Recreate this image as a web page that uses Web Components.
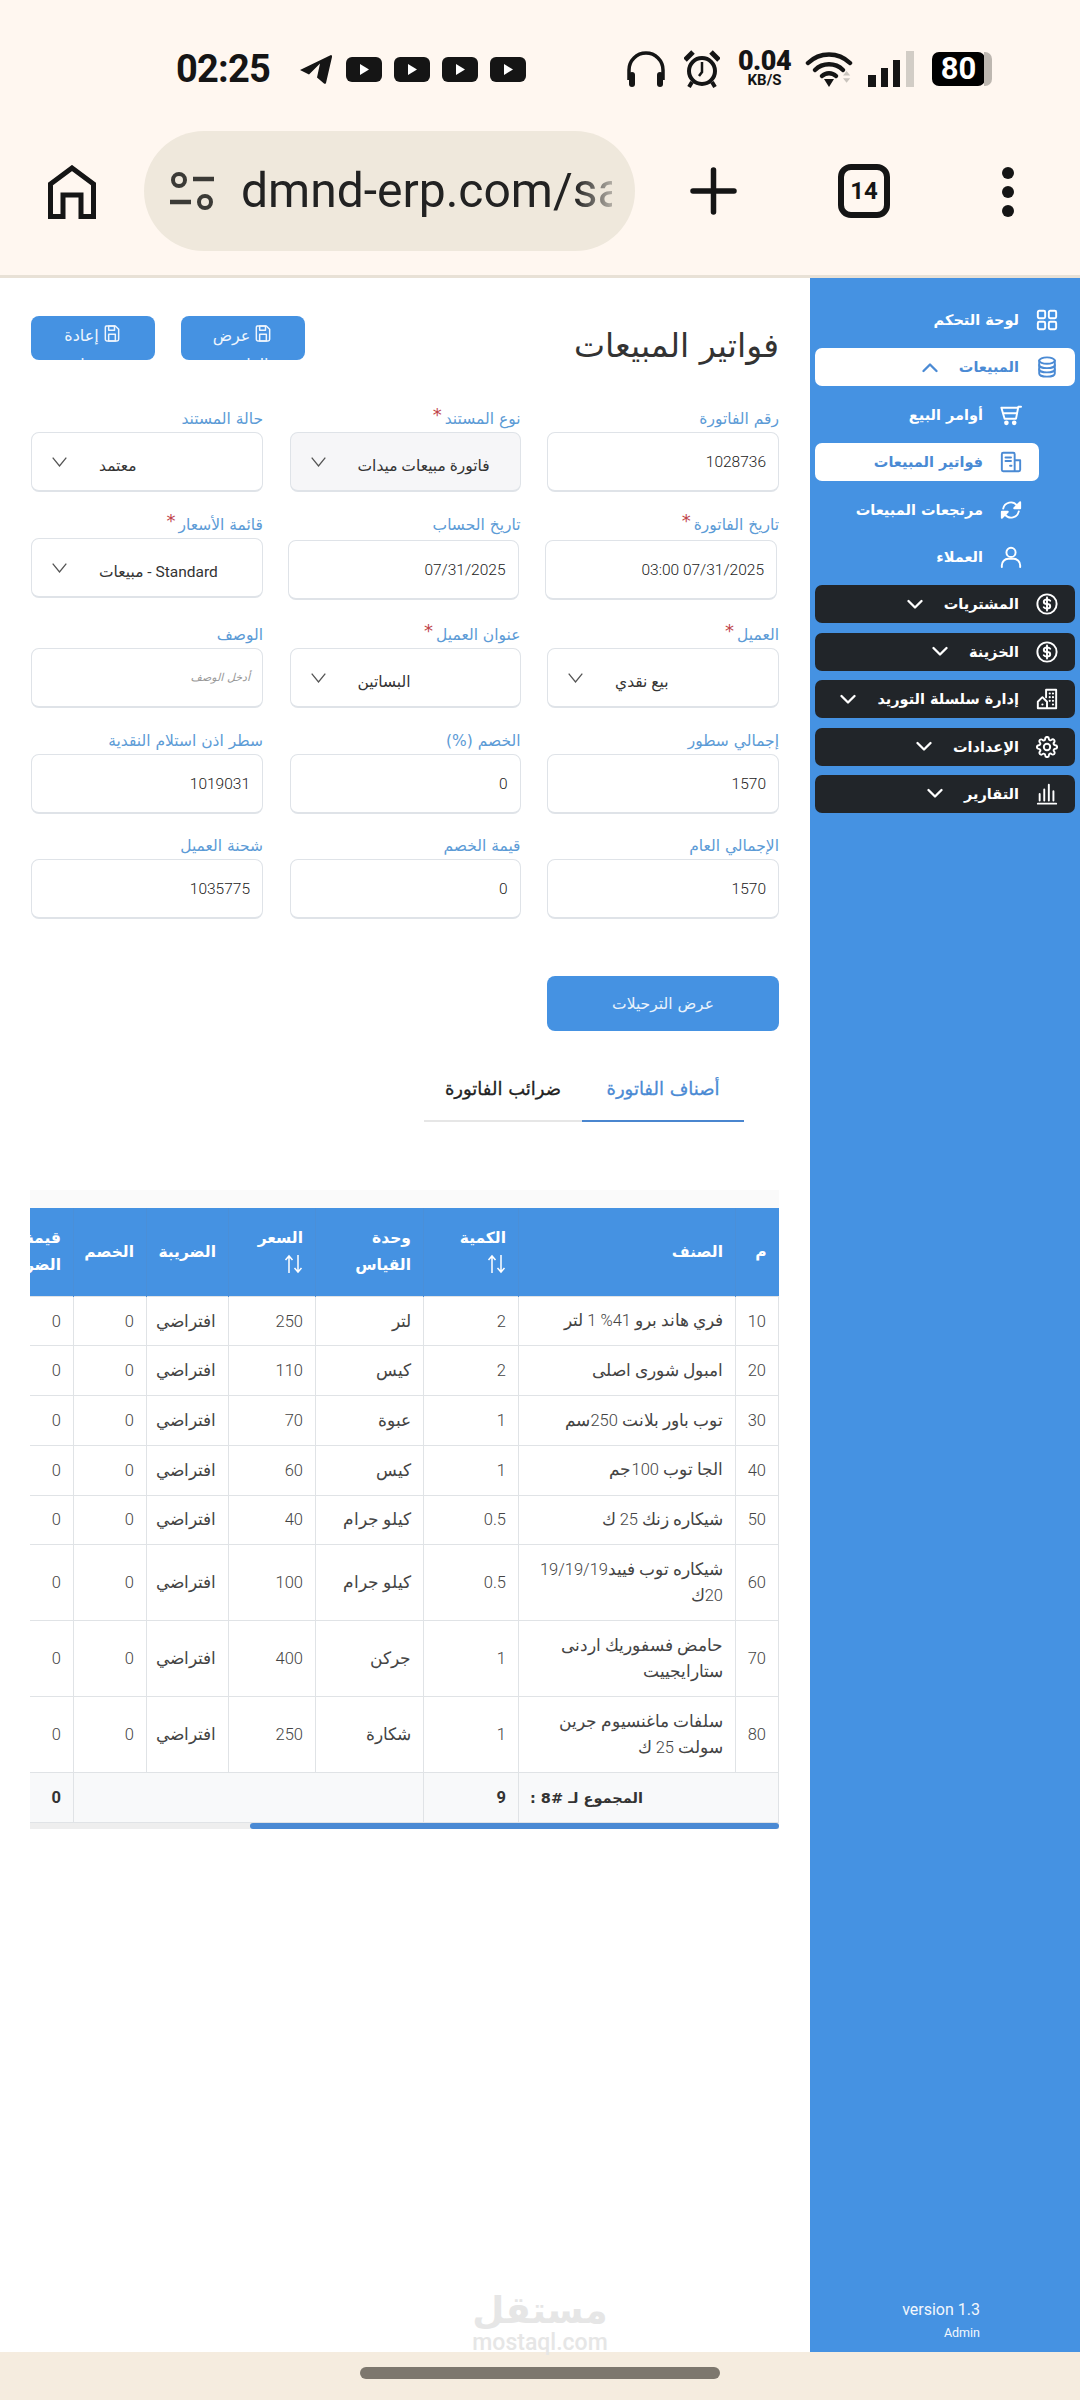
<!DOCTYPE html>
<html lang="ar">
<head>
<meta charset="utf-8">
<title>فواتير المبيعات</title>
<style>
	html, body { margin: 0; padding: 0; }
	body {
		width: 1080px;
		height: 2400px;
		overflow: hidden;
		display: flex;
		flex-direction: column;
		background: #fff;
		font-family: Roboto, "DejaVu Sans", sans-serif;
	}
</style>
</head>
<body>
	<phone-status></phone-status>
	<browser-bar></browser-bar>
	<app-shell>
		<page-head slot="main" title="فواتير المبيعات"></page-head>
		<invoice-form slot="main"></invoice-form>
		<wide-button slot="main">عرض الترحيلات</wide-button>
		<invoice-tabs slot="main"></invoice-tabs>
		<items-table slot="main"></items-table>
		<water-mark slot="main"></water-mark>
		<side-menu slot="side"></side-menu>
	</app-shell>
	<home-bar></home-bar>

<script>
const ICONS = {
	grid: '<rect x="2" y="2" width="8" height="8" rx="1.5"/><rect x="14" y="2" width="8" height="8" rx="1.5"/><rect x="2" y="14" width="8" height="8" rx="1.5"/><rect x="14" y="14" width="8" height="8" rx="1.5"/>',
	db: '<ellipse cx="12" cy="5" rx="8.5" ry="3.5"/><path d="M3.5 5v14c0 2 3.8 3.5 8.5 3.5s8.5-1.500 8.500-3.500V5"/><path d="M3.500 9.700c0 2 3.800 3.500 8.500 3.500s8.500-1.500 8.500-3.500"/><path d="M3.500 14.400c0 2 3.800 3.500 8.500 3.500s8.500-1.500 8.500-3.500"/>',
	cart: '<path d="M23 3h-3L17.500 16H5L1.500 4H20"/><path d="M4 10h14.500"/><circle cx="7" cy="20.500" r="1.500" fill="currentColor"/><circle cx="15.500" cy="20.500" r="1.500" fill="currentColor"/>',
	invoice: '<path d="M16 22H3.500A1.500 1.500 0 0 1 2 20.500V3.500A1.500 1.500 0 0 1 3.500 2h11A1.500 1.500 0 0 1 16 3.500V22h4.500a1.500 1.500 0 0 0 1.500-1.500V10h-6"/><path d="M6 7h6M6 11h6"/><path d="M11 16h1.500"/>',
	refresh: '<path d="M3.500 10.500A8.500 8.500 0 0 1 18.500 7"/><path d="M20.500 13.500A8.500 8.500 0 0 1 5.500 17"/><path d="M22 3.500v6.500h-6.500z" fill="currentColor"/><path d="M2 20.500V14h6.500z" fill="currentColor"/>',
	user: '<circle cx="12" cy="7" r="5"/><path d="M2 23v-2a7 7 0 0 1 7-7h6a7 7 0 0 1 7 7v2"/>',
	dollar: '<circle cx="12" cy="12" r="10.500"/><path d="M15.500 8.500C14.800 7.500 13.500 7 12 7c-2 0-3.500 1-3.500 2.500S10 12 12 12s3.500 1 3.500 2.500S14 17 12 17c-1.500 0-2.800-.5-3.500-1.500"/><path d="M12 5v14"/>',
	building: '<path d="M11 10V2h11v20H2v-7l5-5 5 5v7"/><path d="M15 6h.01M18.500 6h.01M15 10h.01M18.500 10h.01M15 14h.01M18.500 14h.01M18.500 18h.01M7 18h.01" stroke-width="2.400"/>',
	gear: '<circle cx="12" cy="12" r="3.500"/><path d="M19.400 15a1.650 1.650 0 0 0 .33 1.820l.06.06a2 2 0 0 1 0 2.830 2 2 0 0 1-2.830 0l-.06-.06a1.650 1.650 0 0 0-1.820-.33 1.650 1.650 0 0 0-1 1.510V21a2 2 0 0 1-2 2 2 2 0 0 1-2-2v-.09A1.650 1.650 0 0 0 9 19.400a1.650 1.650 0 0 0-1.820.33l-.06.06a2 2 0 0 1-2.830 0 2 2 0 0 1 0-2.830l.06-.06a1.650 1.650 0 0 0 .33-1.820 1.650 1.650 0 0 0-1.510-1H3a2 2 0 0 1-2-2 2 2 0 0 1 2-2h.09A1.650 1.650 0 0 0 4.600 9a1.650 1.650 0 0 0-.33-1.820l-.06-.06a2 2 0 0 1 0-2.830 2 2 0 0 1 2.830 0l.06.06a1.650 1.650 0 0 0 1.820.33H9a1.650 1.650 0 0 0 1-1.510V3a2 2 0 0 1 2-2 2 2 0 0 1 2 2v.09a1.650 1.650 0 0 0 1 1.510 1.650 1.650 0 0 0 1.820-.33l.06-.06a2 2 0 0 1 2.830 0 2 2 0 0 1 0 2.830l-.06.06a1.650 1.650 0 0 0-.33 1.820V9a1.650 1.650 0 0 0 1.510 1H21a2 2 0 0 1 2 2 2 2 0 0 1-2 2h-.09a1.650 1.650 0 0 0-1.510 1z"/>',
	chart: '<path d="M2 22.500h20"/><path d="M4 19v-7M9 19V7M14 19V2M19 19V9"/>',
	save: '<path d="M5 3h11l4 4v12a2 2 0 0 1-2 2H6a2 2 0 0 1-2-2V5a2 2 0 0 1 1-2z"/><rect x="8" y="3" width="7" height="5"/><rect x="8" y="13" width="8" height="8"/>'
};

function icon(name, w, h, sw) {
	return `<svg viewBox="0 0 24 24" width="${w}" height="${h}" fill="none" stroke="currentColor" stroke-width="${sw || 2}" stroke-linecap="round" stroke-linejoin="round">${ICONS[name]}</svg>`;
}

// base class, keeps the boilerplate out of each element
class Part extends HTMLElement {
	constructor() {
		super();
		this.attachShadow({ mode: 'open' });
	}
	connectedCallback() {
		this.shadowRoot.innerHTML = this.markup();
	}
}

class PhoneStatus extends Part {
	markup() {
		const yt = `<svg width="36" height="25" viewBox="0 0 36 25"><rect width="36" height="25" rx="6" fill="#151515"/><path d="M14 7l9 5.500-9 5.500z" fill="#fff"/></svg>`;
		return `
			<style>
				:host { display: flex; align-items: center; height: 118px; box-sizing: border-box; padding: 50px 88px 30px 176px; background: #fff7f0; color: #151515; flex: none; }
				.time { font: 700 38px/38px Roboto, sans-serif; width: 96px; margin-right: 28px; white-space: nowrap; letter-spacing: -.8px; }
				.left { display: flex; align-items: center; }
				.right { display: flex; align-items: center; margin-left: auto; }
				.yts { display: flex; gap: 12px; margin-left: 14px; }
				.speed { display: flex; flex-direction: column; align-items: center; width: 59px; margin: 0 11px 0 15px; font-family: Roboto, sans-serif; font-weight: 700; }
				.speed b { font-size: 27px; line-height: 23px; letter-spacing: -.5px; }
				.speed i { font-style: normal; font-size: 15px; line-height: 15px; }
				.batt { position: relative; display: flex; margin-left: 18px; }
				.batt span { display: block; width: 53px; height: 34px; background: #000; border-radius: 7px; color: #fff; font: 700 31px/34px Roboto, sans-serif; text-align: center; }
				.batt u { display: block; width: 8px; height: 34px; background: #bdb7b0; border-radius: 0 7px 7px 0; margin-left: -1px; }
			</style>
			<div class="left">
				<span class="time">02:25</span>
				<svg width="32" height="29" viewBox="0 0 32 29"><path d="M0 15L31 0c1 0 1 1 1 2l-6 26c-.3 1-1.500 1-2 .5l-7-6 3-14-11 11z" fill="#151515"/></svg>
				<div class="yts">${yt}${yt}${yt}${yt}</div>
			</div>
			<div class="right">
				<svg width="40" height="38" viewBox="0 0 40 38" fill="none" stroke="#151515" stroke-width="3.500"><path d="M3 30V20a17 17 0 0 1 34 0v10"/><rect x="3" y="22" width="6" height="15" rx="3" fill="#151515" stroke="none"/><rect x="31" y="22" width="6" height="15" rx="3" fill="#151515" stroke="none"/></svg>
				<svg width="36" height="38" viewBox="0 0 36 38" style="margin-left:18px" fill="none" stroke="#151515" stroke-width="4"><circle cx="18" cy="21" r="13"/><path d="M18 12v10l-3 4" stroke-width="2.500"/><path d="M1 10l8-8M35 10l-8-8" stroke-width="5"/><path d="M8 32l-3 5M28 32l3 5"/></svg>
				<div class="speed"><b>0.04</b><i>KB/S</i></div>
				<svg width="50" height="36" viewBox="0 0 50 36" fill="none" stroke="#151515" stroke-width="4.500" stroke-linecap="round"><path d="M3 12a30 30 0 0 1 42 0"/><path d="M10 19a20 20 0 0 1 28 0"/><path d="M17 25a10 10 0 0 1 14 0"/><path d="M19 28h10l-5 8z" fill="#151515" stroke="none"/><path d="M40 25l4-5 4 5zM40 28l4 5 4-5z" fill="#c9c4bd" stroke="none" transform="translate(2 2) scale(.9)"/></svg>
				<svg width="46" height="36" viewBox="0 0 46 36" style="margin-left:13px"><rect x="0" y="24" width="8" height="12" fill="#151515"/><rect x="13" y="17" width="7" height="19" fill="#151515"/><rect x="25" y="9" width="7" height="27" fill="#151515"/><rect x="38" y="0" width="8" height="36" fill="#d2cdc6"/></svg>
				<div class="batt"><span>80</span><u></u></div>
			</div>
		`;
	}
}

class BrowserBar extends Part {
	markup() {
		return `
			<style>
				:host { display: flex; align-items: flex-start; height: 160px; box-sizing: border-box; padding: 13px 0 0 48px; background: #fff7f0; border-bottom: 3px solid #e8e1d6; color: #151515; flex: none; }
				.home { margin-top: 34px; }
				.pill { display: flex; align-items: center; width: 491px; height: 120px; margin-left: 48px; box-sizing: border-box; padding: 0 23px 0 26px; border-radius: 60px; background: #efe8dc; flex: none; }
				.url { margin-left: 27px; font: 400 48px/60px Roboto, sans-serif; color: #222; white-space: nowrap; overflow: hidden; width: 371px;
					-webkit-mask-image: linear-gradient(to right, #000 90%, rgba(0,0,0,.3) 100%); mask-image: linear-gradient(to right, #000 90%, rgba(0,0,0,.3) 100%); }
				.plus { margin: 36px 0 0 55px; }
				.tab { margin: 33px 0 0 101px; width: 52px; height: 54px; box-sizing: border-box; border: 6px solid #151515; border-radius: 13px; display: flex; align-items: center; justify-content: center; font: 700 24px/1 Roboto, sans-serif; }
				.dots { margin: 36px 0 0 112px; display: flex; flex-direction: column; gap: 7px; }
				.dots span { display: block; width: 12px; height: 12px; border-radius: 50%; background: #151515; }
			</style>
			<svg class="home" width="48" height="54" viewBox="0 0 48 54" fill="none" stroke="#151515" stroke-width="5"><path d="M2.500 51.500V19L24 3l21.500 16v32.500H33V30H15v21.500z"/></svg>
			<div class="pill">
				<svg width="44" height="38" viewBox="0 0 44 38" fill="none" stroke="#3b3a36" stroke-width="4" style="flex:none"><circle cx="9" cy="8" r="6"/><path d="M23 7h21" stroke-width="4.500"/><path d="M0 30h21" stroke-width="4.500"/><circle cx="35" cy="30" r="6"/></svg>
				<div class="url">dmnd-erp.com/sales</div>
			</div>
			<svg class="plus" width="47" height="48" viewBox="0 0 47 48" stroke="#151515" stroke-width="5.500" stroke-linecap="round"><path d="M23.500 3v42M3 24h41"/></svg>
			<div class="tab">14</div>
			<div class="dots"><span></span><span></span><span></span></div>
		`;
	}
}

class AppShell extends Part {
	markup() {
		return `
			<style>
				:host { display: flex; flex: 1; min-height: 0; }
				.main { position: relative; width: 810px; flex: none; box-sizing: border-box; padding: 38px 31px 0 30px; display: flex; flex-direction: column; }
				.side { width: 270px; flex: none; display: flex; }
			</style>
			<div class="main"><slot name="main"></slot></div>
			<div class="side"><slot name="side"></slot></div>
		`;
	}
}

class PageHead extends Part {
	markup() {
		return `
			<style>
				:host { display: flex; direction: rtl; justify-content: space-between; align-items: flex-start; height: 91px; color: #333; }
				h1 { margin: 8px 0 0; font: 400 33px/44px "DejaVu Sans", sans-serif; color: #333; }
				.btns { display: flex; gap: 26px; padding-left: 1px; }
				.btn { width: 124px; height: 44px; overflow: hidden; box-sizing: border-box; padding: 5px 8px 0; border-radius: 8px; background: #4592e2; color: #eef5fd; text-align: center; font: 400 16px/29px "DejaVu Sans", sans-serif; white-space: nowrap; }
				.btn svg { vertical-align: -5px; margin-left: 3px; }
			</style>
			<h1>${this.getAttribute('title')}</h1>
			<div class="btns">
				<div class="btn">${icon('save', 20, 25, 1.8)}عرض<br>الفاتورة</div>
				<div class="btn">${icon('save', 20, 25, 1.8)}إعادة<br>ترحيل</div>
			</div>
		`;
	}
}

class ErpField extends Part {
	markup() {
		const a = (n) => this.getAttribute(n) || '';
		const isSelect = a('kind') === 'select';
		const star = this.hasAttribute('required') ? '<em>*</em>' : '';
		let inner;
		if (isSelect) {
			inner = `<svg width="15" height="10" viewBox="0 0 15 10" fill="none" stroke="#555" stroke-width="1.300"><path d="M.7.700l6.800 8.300L14.300.700"/></svg><span class="sel" dir="rtl">${a('value')}</span>`;
		} else if (a('placeholder')) {
			inner = `<i>${a('placeholder')}</i>`;
		} else {
			inner = `<span dir="ltr">${a('value')}</span>`;
		}
		return `
			<style>
				:host { display: block; direction: rtl; ${a('shift') ? 'transform: translate(-2px, 2px);' : ''} }
				.lab { height: 25px; font: 400 15.500px/24px "DejaVu Sans", sans-serif; color: #5c9bd6; white-space: nowrap; }
				${a('shift') ? '.lab { transform: translate(2px, -2px); }' : ''}
				em { font-style: normal; color: #c0444a; font-size: 18px; line-height: 14px; vertical-align: 3px; margin-right: 3px; }
				.box { height: 60px; box-sizing: border-box; border: 1px solid #dfe3e8; border-bottom-width: 2px; border-radius: 8px; background: ${this.hasAttribute('muted') ? '#f6f6f8' : '#fff'}; display: flex; align-items: center; padding: 0 12px; font: 300 15.500px/20px Roboto, "DejaVu Sans", sans-serif; color: #222; }
				.box.select { direction: ltr; padding: 0 0 0 20px; }
				.sel { margin-left: 32px; padding-top: 8px; font-size: 15.500px; font-weight: 400; color: #333; white-space: nowrap; }
				i { font: italic 400 11px/20px "DejaVu Sans", sans-serif; color: #999; }
			</style>
			<div class="lab">${a('label')}${star}</div>
			<div class="box ${isSelect ? 'select' : ''}">${inner}</div>
		`;
	}
}

class InvoiceForm extends Part {
	markup() {
		return `
			<style>
				:host { display: grid; direction: rtl; grid-template-columns: 232px 231px 232px; column-gap: 26.500px; justify-content: start; grid-template-rows: 106px 110px 106px 105px 85px; }
			</style>
			<erp-field label="رقم الفاتورة" value="1028736"></erp-field>
			<erp-field label="نوع المستند" required kind="select" muted value="فاتورة مبيعات ميدات"></erp-field>
			<erp-field label="حالة المستند" kind="select" value="معتمد"></erp-field>
			<erp-field label="تاريخ الفاتورة" required shift="1" value="03:00 07/31/2025"></erp-field>
			<erp-field label="تاريخ الحساب" shift="1" value="07/31/2025"></erp-field>
			<erp-field label="قائمة الأسعار" required kind="select" value="Standard - مبيعات"></erp-field>
			<erp-field label="العميل" required kind="select" value="بيع نقدي"></erp-field>
			<erp-field label="عنوان العميل" required kind="select" value="البساتين"></erp-field>
			<erp-field label="الوصف" placeholder="أدخل الوصف"></erp-field>
			<erp-field label="إجمالي سطور" value="1570"></erp-field>
			<erp-field label="الخصم (%)" value="0"></erp-field>
			<erp-field label="سطر اذن استلام النقدية" value="1019031"></erp-field>
			<erp-field label="الإجمالي العام" value="1570"></erp-field>
			<erp-field label="قيمة الخصم" value="0"></erp-field>
			<erp-field label="شحنة العميل" value="1035775"></erp-field>
		`;
	}
}

class WideButton extends Part {
	markup() {
		return `
			<style>
				:host { display: flex; align-self: flex-end; align-items: center; justify-content: center; width: 232px; height: 55px; margin-top: 57px; border-radius: 8px; background: #4592e2; color: #eaf3fc; font: 400 15.500px/20px "DejaVu Sans", sans-serif; direction: rtl; }
			</style>
			<slot></slot>
		`;
	}
}

class InvoiceTabs extends Part {
	markup() {
		return `
			<style>
				:host { display: flex; direction: rtl; height: 90px; padding-right: 35px; flex: none; font: 400 18px/20px "DejaVu Sans", sans-serif; -webkit-text-stroke: .3px currentColor; }
				.tab { display: flex; align-items: center; justify-content: center; box-sizing: border-box; height: 91px; padding-top: 27px; border-bottom: 2px solid #e6e6e6; color: #222; white-space: nowrap; }
				.on { width: 162px; color: #4a8ad4; border-bottom-color: #4a86cf; }
				.off { width: 158px; }
			</style>
			<div class="tab on">أصناف الفاتورة</div>
			<div class="tab off">ضرائب الفاتورة</div>
		`;
	}
}

class ItemsTable extends Part {
	markup() {
		const rows = [
			['10', 'فري هاند برو 41% 1 لتر', '2', 'لتر', '250', 49],
			['20', 'امبول شورى اصلى', '2', 'كيس', '110', 50],
			['30', 'توب باور بلانت 250سم', '1', 'عبوة', '70', 50],
			['40', 'الجا توب 100جم', '1', 'كيس', '60', 49.500],
			['50', 'شيكاره زنك 25 ك', '0.5', 'كيلو جرام', '40', 49.500],
			['60', 'شيكاره توب فييد19/19/19<br>20ك', '0.5', 'كيلو جرام', '100', 76],
			['70', 'حامض فسفوريك اردنى<br>ستارايجييت', '1', 'جركن', '400', 76],
			['80', 'سلفات ماغنسيوم جرين<br>سولت 25 ك', '1', 'شكارة', '250', 76]
		];
		const body = rows.map((r) => `<tr style="height:${r[5]}px">
			<td>${r[0]}</td><td class="item">${r[1]}</td><td>${r[2]}</td><td>${r[3]}</td><td>${r[4]}</td><td>افتراضي</td><td>0</td><td>0</td>
		</tr>`).join('');
		const sort = '<svg width="19" height="20" viewBox="0 0 19 20" fill="none" stroke="#fff" stroke-width="1.500"><path d="M5 19V2M1.500 6L5 2l3.500 4M14 1v17M10.500 14l3.500 4 3.500-4"/></svg>';
		return `
			<style>
				:host { display: block; direction: rtl; width: 749px; margin-top: 69px; overflow: hidden; flex: none; border-top: 18px solid #fafafa; padding-bottom: 6px; position: relative; }
				table { border-collapse: collapse; table-layout: fixed; width: 796px; font: 300 16.500px/19px Roboto, "DejaVu Sans", sans-serif; color: #444; }
				th { height: 88px; padding: 0 12px; background: #4592e2; color: #fff; font: 700 15.500px/27px "DejaVu Sans", sans-serif; text-align: right; border-left: 1px solid #4a8fd8; white-space: nowrap; overflow: hidden; }
				td { padding: 0 12px; border: 1px solid #e0e3e6; text-align: right; white-space: nowrap; }
				td.item { line-height: 26px; font-size: 16.500px; overflow: hidden; }
				tfoot td { height: 49px; background: #f8f9fa; font-weight: 700; color: #333; }
				tfoot .lbl { text-align: left; padding-left: 11px; font: 700 14.500px/20px "DejaVu Sans", sans-serif; }
				svg { display: inline-block; vertical-align: -4px; }
				.bar { position: absolute; left: 0; right: 0; bottom: 0; height: 6px; background: #eee; }
				.bar span { position: absolute; right: 0; width: 529px; height: 6px; border-radius: 3px; background: #4a8ad4; }
			</style>
			<table>
				<colgroup><col style="width:43px"><col style="width:217px"><col style="width:95px"><col style="width:108px"><col style="width:87px"><col style="width:82px"><col style="width:73px"><col style="width:91px"></colgroup>
				<thead><tr>
					<th>م</th><th>الصنف</th><th>الكمية<br>${sort}</th><th>وحدة<br>القياس</th><th>السعر<br>${sort}</th><th>الضريبة</th><th>الخصم</th><th>قيمة<br>الضريبة</th>
				</tr></thead>
				<tbody>${body}</tbody>
				<tfoot><tr>
					<td colspan="2" class="lbl">المجموع لـ #8 :</td><td>9</td><td colspan="4"></td><td>0</td>
				</tr></tfoot>
			</table>
			<div class="bar"><span></span></div>
		`;
	}
}

class WaterMark extends Part {
	markup() {
		return `
			<style>
				:host { position: absolute; left: 470px; top: 2010px; width: 140px; text-align: center; color: #e6e6e6; }
				b { display: block; font: 700 37px/46px "DejaVu Sans", sans-serif; white-space: nowrap; }
				span { display: block; font: 500 23px/18px Roboto, sans-serif; }
			</style>
			<b>مستقل</b>
			<span>mostaql.com</span>
		`;
	}
}

class SideItem extends Part {
	markup() {
		const a = (n) => this.getAttribute(n) || '';
		const tone = a('tone');
		const chev = a('chev');
		const chevPath = chev === 'up' ? 'M1.500 9L8 2.500 14.500 9' : 'M1.500 2L8 8.500 14.500 2';
		const chevSvg = chev ? `<svg class="ch" width="16" height="11" viewBox="0 0 16 11" fill="none" stroke="currentColor" stroke-width="2.300" stroke-linecap="round" stroke-linejoin="round"><path d="${chevPath}"/></svg>` : '';
		const bg = tone === 'dark' ? '#212529' : tone === 'on' ? '#fff' : 'transparent';
		const col = tone === 'on' ? '#4a8ad4' : '#fff';
		return `
			<style>
				:host { display: flex; direction: rtl; align-items: center; height: 38px; box-sizing: border-box; padding-right: 17px; border-radius: 7px; background: ${bg}; color: ${col}; font: 700 14.500px/20px "DejaVu Sans", sans-serif; white-space: nowrap; }
				.ch { margin-right: 21px; }
			</style>
			<span style="display:flex">${icon(a('icon'), 22, 22, 2.100)}</span>
			<span style="margin-right:17px">${a('text')}</span>
			${chevSvg}
		`;
	}
}

class SideMenu extends Part {
	markup() {
		return `
			<style>
				:host { display: flex; flex-direction: column; flex: 1; box-sizing: border-box; padding: 23px 5px 11px; gap: 9.400px; background: #4592e2; }
				.sub { display: flex; flex-direction: column; gap: 9.400px; padding-right: 36px; }
				.foot { margin-top: auto; direction: ltr; text-align: right; padding-right: 95px; color: #f2f7fd; font-family: Roboto, sans-serif; }
				.foot div { font-size: 16px; line-height: 20px; }
				.foot small { display: block; margin-top: 5px; font-size: 12.500px; line-height: 16px; }
			</style>
			<side-item icon="grid" text="لوحة التحكم"></side-item>
			<side-item icon="db" text="المبيعات" tone="on" chev="up"></side-item>
			<div class="sub">
				<side-item icon="cart" text="أوامر البيع"></side-item>
				<side-item icon="invoice" text="فواتير المبيعات" tone="on"></side-item>
				<side-item icon="refresh" text="مرتجعات المبيعات"></side-item>
				<side-item icon="user" text="العملاء"></side-item>
			</div>
			<side-item icon="dollar" text="المشتريات" tone="dark" chev="down"></side-item>
			<side-item icon="dollar" text="الخزينة" tone="dark" chev="down"></side-item>
			<side-item icon="building" text="إدارة سلسلة التوريد" tone="dark" chev="down"></side-item>
			<side-item icon="gear" text="الإعدادات" tone="dark" chev="down"></side-item>
			<side-item icon="chart" text="التقارير" tone="dark" chev="down"></side-item>
			<div class="foot"><div>version 1.3</div><small>Admin</small></div>
		`;
	}
}

class HomeBar extends Part {
	markup() {
		return `
			<style>
				:host { display: flex; height: 48px; flex: none; padding: 15px 0 0 360px; box-sizing: border-box; background: #f5ecdf; }
				span { display: block; width: 360px; height: 12px; border-radius: 6px; background: #7d776e; }
			</style>
			<span></span>
		`;
	}
}

customElements.define('phone-status', PhoneStatus);
customElements.define('browser-bar', BrowserBar);
customElements.define('app-shell', AppShell);
customElements.define('page-head', PageHead);
customElements.define('erp-field', ErpField);
customElements.define('invoice-form', InvoiceForm);
customElements.define('wide-button', WideButton);
customElements.define('invoice-tabs', InvoiceTabs);
customElements.define('items-table', ItemsTable);
customElements.define('water-mark', WaterMark);
customElements.define('side-item', SideItem);
customElements.define('side-menu', SideMenu);
customElements.define('home-bar', HomeBar);
</script>
</body>
</html>
